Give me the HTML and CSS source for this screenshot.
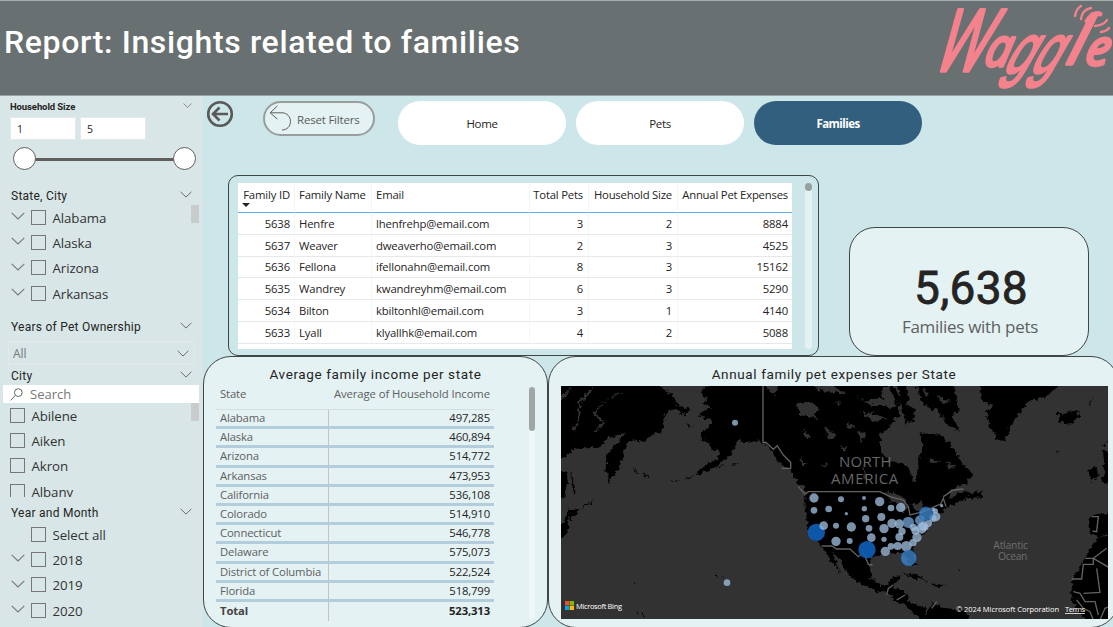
FILE: index.html
```
<!DOCTYPE html>
<html lang="en">
<head>
<meta charset="utf-8">
<title>Report: Insights related to families</title>
<link rel="stylesheet" href="styles.css">
</head>
<body>
<svg class="defs" width="0" height="0">
  <symbol id="chev" viewBox="0 0 14 8"><path d="M.7 .9 7 7 13.3 .9" fill="none" stroke="currentColor" stroke-width="1.1"/></symbol>
</svg>
<header class="top">
  <h1>Report: Insights related to families</h1>
  <svg class="logo" width="180" height="94" viewBox="933 2 180 94" role="img" aria-label="Waggle">
    <g class="word">
      <text transform="translate(933 71) skewX(-17) scale(.68 1)" font-size="86">W</text>
      <text transform="translate(983 66) skewX(-14) scale(.86 1)" font-size="53">a</text>
      <text class="g" transform="translate(1001 73) skewX(-30) scale(.86 1.28)" font-size="54">g</text>
      <text class="g" transform="translate(1028 73) skewX(-30) scale(.86 1.28)" font-size="54">g</text>
      <text transform="translate(1065 64) skewX(-16)" font-size="66">l</text>
      <text transform="translate(1084 65) skewX(-12) scale(.96 1)" font-size="49">e</text>
    </g>
    <g class="wag">
      <path d="M1075 16Q1076 9 1081 6M1081 19Q1082 10 1091 8M1095 26Q1104 25 1107 20M1101 32Q1107 31 1109 28"/><path stroke-width="5" d="M1087 21Q1094 12 1100 14"/>
    </g>
  </svg>
</header>
<div class="body">
  <aside class="side">
    <section class="f-size">
      <div class="head small"><b>Household Size</b><svg class="cv"><use href="#chev"/></svg></div>
      <div class="inputs"><span>1</span><span>5</span></div>
      <div class="slider"><i></i><i></i></div>
    </section>
    <section class="f-state">
      <div class="head"><span>State, City</span><svg class="cv"><use href="#chev"/></svg></div>
      <ul class="tree">
        <li><svg><use href="#chev"/></svg><i></i>Alabama</li>
        <li><svg><use href="#chev"/></svg><i></i>Alaska</li>
        <li><svg><use href="#chev"/></svg><i></i>Arizona</li>
        <li><svg><use href="#chev"/></svg><i></i>Arkansas</li>
      </ul>
      <div class="bar"></div>
    </section>
    <section class="f-years">
      <div class="head"><span>Years of Pet Ownership</span><svg class="cv"><use href="#chev"/></svg></div>
      <div class="drop"><span>All</span><svg class="cv"><use href="#chev"/></svg></div>
    </section>
    <section class="f-city">
      <div class="head"><span>City</span><svg class="cv"><use href="#chev"/></svg></div>
      <div class="search"><svg width="13" height="13" viewBox="0 0 13 13"><circle cx="8.3" cy="4.6" r="3.9"/><path d="M5.4 7.4.6 12.4"/></svg><span>Search</span></div>
      <ul class="tree flat">
        <li><i></i>Abilene</li>
        <li><i></i>Aiken</li>
        <li><i></i>Akron</li>
        <li><i></i>Albany</li>
      </ul>
      <div class="bar"></div>
    </section>
    <section class="f-month">
      <div class="head"><span>Year and Month</span><svg class="cv"><use href="#chev"/></svg></div>
      <ul class="tree">
        <li><svg></svg><i></i>Select all</li>
        <li><svg><use href="#chev"/></svg><i></i>2018</li>
        <li><svg><use href="#chev"/></svg><i></i>2019</li>
        <li><svg><use href="#chev"/></svg><i></i>2020</li>
      </ul>
    </section>
  </aside>
  <main>
    <nav>
      <svg class="back" width="28" height="28" viewBox="0 0 28 28"><circle cx="14" cy="14" r="11.8" stroke-width="2.6"/><path d="M22 14H7M13.5 7.5 7 14l6.5 6.5" stroke-width="2.6"/></svg>
      <button class="reset"><svg width="23" height="27" viewBox="0 0 23 27"><path d="M8.5.8 1.2 7.8 8.5 14.2M1.2 7.8H13c5 0 8.500 4 8.500 8.700S18 25 13 25"/></svg><span>Reset Filters</span></button>
      <a class="tab t1">Home</a><a class="tab">Pets</a><a class="tab on">Families</a>
    </nav>
    <div class="row1">
      <section class="panel families">
        <table>
          <colgroup><col style="width:57px"><col style="width:77px"><col style="width:158px"><col style="width:59px"><col style="width:89px"><col style="width:114px"></colgroup>
          <thead><tr><th class="sorted">Family ID</th><th class="l">Family Name</th><th class="l">Email</th><th>Total Pets</th><th>Household Size</th><th>Annual Pet Expenses</th></tr></thead>
          <tbody>
            <tr><td>5638</td><td class="l">Henfre</td><td class="l">lhenfrehp@email.com</td><td>3</td><td>2</td><td>8884</td></tr>
            <tr><td>5637</td><td class="l">Weaver</td><td class="l">dweaverho@email.com</td><td>2</td><td>3</td><td>4525</td></tr>
            <tr><td>5636</td><td class="l">Fellona</td><td class="l">ifellonahn@email.com</td><td>8</td><td>3</td><td>15162</td></tr>
            <tr><td>5635</td><td class="l">Wandrey</td><td class="l">kwandreyhm@email.com</td><td>6</td><td>3</td><td>5290</td></tr>
            <tr><td>5634</td><td class="l">Bilton</td><td class="l">kbiltonhl@email.com</td><td>3</td><td>1</td><td>4140</td></tr>
            <tr><td>5633</td><td class="l">Lyall</td><td class="l">klyallhk@email.com</td><td>4</td><td>2</td><td>5088</td></tr>
          </tbody>
        </table>
        <div class="scroll"><i></i></div>
      </section>
      <section class="panel card"><strong>5,638</strong><span>Families with pets</span></section>
    </div>
    <div class="row2">
      <section class="panel income">
        <h2>Average family income per state</h2>
        <div class="wrap">
        <table>
          <colgroup><col style="width:113px"><col style="width:165px"></colgroup>
          <thead><tr><th>State</th><th>Average of Household Income</th></tr></thead>
          <tbody>
            <tr><td>Alabama</td><td>497,285</td></tr>
            <tr><td>Alaska</td><td>460,894</td></tr>
            <tr><td>Arizona</td><td>514,772</td></tr>
            <tr><td>Arkansas</td><td>473,953</td></tr>
            <tr><td>California</td><td>536,108</td></tr>
            <tr><td>Colorado</td><td>514,910</td></tr>
            <tr><td>Connecticut</td><td>546,778</td></tr>
            <tr><td>Delaware</td><td>575,073</td></tr>
            <tr><td>District of Columbia</td><td>522,524</td></tr>
            <tr><td>Florida</td><td>518,799</td></tr>
            <tr class="total"><td>Total</td><td>523,313</td></tr>
          </tbody>
        </table>
        <div class="scroll"><i></i></div>
        </div>
      </section>
      <section class="panel mapbox">
        <h2>Annual family pet expenses per State</h2>
        <svg class="map" width="547" height="233" viewBox="0 0 547 233">
          <defs>
            <filter id="coast" x="0" y="0" width="100%" height="100%"><feTurbulence type="fractalNoise" baseFrequency=".22" numOctaves="3" seed="4"/><feDisplacementMap in="SourceGraphic" scale="7" xChannelSelector="R" yChannelSelector="G"/></filter>
          </defs>
          <rect width="547" height="233" fill="#323232"/>
          <g filter="url(#coast)">
          <rect x="-10" y="-10" width="567" height="253" fill="#323232"/>
          <g transform="translate(219 -31) scale(.33333)">
            <!-- Asia -->
            <path d="M-690 60H-375L-365 90-345 105-318 122-305 150-273 160-280 178-312 168-330 163-345 180-350 205-353 228-378 235-412 262-440 255-462 268-470 300-487 345-515 383-523 340-520 300-500 275-480 255-458 228-485 240-515 245-540 275-615 280-660 318H-690Z"/>
            <path d="M-680 345-640 350-636 385-645 420-680 450ZM-630 345-618 385-612 420-622 410ZM-635 462-600 467-615 480-632 485-635 520-650 548-680 550V520L-645 500Z"/>
            <path d="M-415 93-408 112-428 105ZM-280 206-262 216-270 218Z"/>
            <!-- North and Central America -->
            <path d="M-215 60V90L-240 115-215 128-230 145-205 160-225 165-248 178-225 190-200 195-212 215-235 230-240 252-215 262-205 285-175 290-190 310-225 335-260 362-220 347-180 328-150 300-132 275-125 255-105 262-85 258-55 262-35 275-5 320 30 345 42 370 75 400 76 430 78 480 85 525 100 555 122 570 145 605 180 655 168 622 152 590 170 600 198 645 212 670 250 690 290 708 320 715 352 740 380 752 400 780 430 795 440 760 400 745 385 735 375 705 335 700 362 665 340 662 328 690 300 690 275 670 270 640 275 605 300 600 345 594 372 594 392 630 408 630 395 580 420 550 440 520 462 498 490 472 500 458 520 448 575 425 560 405 530 420 512 432 505 405 560 385 580 355 550 330 530 300 512 270 480 240 422 232 428 270 412 330 412 385 395 372 385 330 340 320 300 290 300 240 330 212 355 180 360 130 340 90V60Z"/>
            <path d="M350 60H380L385 140 365 160ZM400 60H510L530 130 540 165 515 180 540 230 500 210 480 175 450 160 425 145ZM365 150 400 155 405 200 375 205ZM560 420 605 405 602 432 575 428ZM370 656 410 660 445 678 400 668ZM448 685 500 690 475 696Z"/>
            <path d="M420 815 455 745 500 760 560 765 570 815Z"/>
            <!-- Greenland, Iceland, Europe, Africa -->
            <path d="M605 60H845L835 90 800 125 745 140 715 180 690 215 672 262 650 250 630 215 618 170 640 150 605 140Z"/>
            <path d="M830 172 850 182 865 170 895 165 897 190 868 210 840 200ZM925 345 950 335 955 370 930 378ZM968 285 1010 290V390L965 380 975 345Z"/>
            <path d="M935 480 1020 468V530L955 545 925 530ZM955 545 1020 540V820H940L905 780 875 735 875 675 910 620 930 580Z"/>
            <g fill="#323232">
              <path d="M50 145 90 140 120 165 100 180 115 190 60 180ZM130 215 170 240 150 255ZM160 140 180 140 185 150ZM215 108 255 140 300 125 320 150 270 150ZM320 408 370 425 385 460 372 480 350 440 330 440ZM390 450 420 440 435 470 412 470ZM455 170 475 160 480 185 465 190ZM-50 90-5 90-15 120ZM90 92 150 90 200 115 130 112ZM240 170 280 175 320 190 280 200Z"/>
              <path d="M395 60 420 140 400 150 385 130ZM330 95 350 150 325 160 300 105ZM430 100 450 110 440 125ZM470 120 510 140 490 150ZM440 310 480 315 460 325ZM500 320 530 335 505 340ZM235 230 260 240 240 260ZM205 200 225 215 200 220ZM180 270 200 275 190 290ZM65 225 90 240 80 250ZM120 330 150 328 140 335ZM60 305 80 330 70 335ZM250 330 262 370 250 375Z"/>
              <path d="M-560 93-565 110-600 145-598 180-615 230-620 225-604 175-607 140-570 105ZM-480 110-540 150-560 175-530 205-560 230-555 232-522 205-552 175-530 140-475 113ZM-630 93-635 115-665 140-660 180-672 235-676 234-667 180-670 135-640 112Z"/>
            </g>
            <g class="isles"><path d="M-445 340-425 355M-410 360-390 365M-325 378-300 378M-290 375-260 362M-190 340-170 332M-140 328-125 325M-610 470-565 440M-195 660-185 664M-178 668-163 672M-440 683h5M-427 770v8M-412 772l5 12M825 285l10 8M960 275l25-16M925 155l10-22M540 650l-8-6"/></g>
          </g>
          </g>
          <g transform="translate(219 -31) scale(.33333)">
            <g class="border">
              <path d="M-51 90V262H-42L-20 283 -8 272 10 300 32 322V340H5M55 395 75 418 85 410H300L330 425 370 435 385 455 390 480 430 470 470 452 482 448 490 430 498 455M125 573H155L170 582H210L235 605 250 592 265 628 278 630M320 720 325 700 340 690M350 735 375 720M455 760 470 740M490 425 520 405 550 402"/>
              <path d="M935 485H955L950 530 938 528M875 672H905L910 628H940V610H915M950 640 960 712 910 715M940 610 1000 645M940 610 980 580M880 710 900 715 915 740 945 740 955 780M890 735 910 760 930 770 940 795M960 795 975 760 1000 750"/>
            </g>
            <g class="place"><text x="256" y="337" font-size="45" textLength="158">NORTH</text><text x="254" y="387" font-size="45" textLength="202">AMERICA</text></g>
            <g class="sea"><text x="692" y="581" font-size="31" textLength="104">Atlantic</text><text x="698" y="614" font-size="31" textLength="88">Ocean</text></g>
            <g class="dots">
              <circle cx="-135" cy="203" r="9"/><circle cx="-159" cy="683" r="10"/>
              <circle cx="102" cy="429" r="14"/><circle cx="102" cy="466" r="10"/><circle cx="146" cy="462" r="10"/><circle cx="183" cy="433" r="9"/><circle cx="199" cy="476" r="5"/><circle cx="252" cy="429" r="6"/><circle cx="253" cy="461" r="8"/><circle cx="257" cy="491" r="11"/><circle cx="299" cy="440" r="14"/><circle cx="333" cy="459" r="10"/><circle cx="362" cy="457" r="14"/><circle cx="304" cy="486" r="12"/>
              <circle cx="168" cy="512" r="9"/><circle cx="214" cy="516" r="14"/><circle cx="168" cy="559" r="14"/><circle cx="209" cy="558" r="9"/><circle cx="267" cy="520" r="10"/><circle cx="274" cy="548" r="13"/><circle cx="312" cy="521" r="14"/><circle cx="312" cy="553" r="8"/><circle cx="316" cy="589" r="14"/><circle cx="333" cy="574" r="10"/><circle cx="353" cy="573" r="12"/><circle cx="379" cy="574" r="16"/><circle cx="399" cy="563" r="11"/><circle cx="411" cy="547" r="14"/><circle cx="336" cy="505" r="14"/><circle cx="358" cy="507" r="14"/><circle cx="366" cy="529" r="11"/><circle cx="358" cy="546" r="12"/>
              <circle class="m" cx="385" cy="502" r="17"/><circle cx="400" cy="517" r="11"/><circle cx="406" cy="527" r="12"/><circle class="m" cx="420" cy="496" r="15"/><circle cx="425" cy="520" r="16"/><circle cx="430" cy="514" r="14"/><circle cx="437" cy="516" r="9"/><circle cx="445" cy="505" r="11"/><circle cx="459" cy="490" r="11"/><circle cx="467" cy="485" r="14"/><circle cx="466" cy="468" r="8"/><circle cx="460" cy="464" r="6"/><circle cx="485" cy="452" r="5"/>
              <circle class="h2" cx="438" cy="476" r="20"/><circle class="h2" cx="386" cy="609" r="23"/>
              <circle class="h" cx="109" cy="532" r="26"/><circle class="h" cx="261" cy="584" r="26"/><circle cx="131" cy="512" r="13"/>
            </g>
          </g>
          <g><path fill="#f25022" d="M4 215h4.300v4.300H4z"/><path fill="#7fba00" d="M8.700 215H13v4.300H8.700z"/><path fill="#00a4ef" d="M4 219.700h4.300v4.300H4z"/><path fill="#ffb900" d="M8.700 219.700H13v4.300H8.700z"/></g>
          <g class="credit"><text x="15" y="223" font-size="7.500" textLength="46">Microsoft Bing</text><text x="395" y="226" font-size="7.500" textLength="103">© 2024 Microsoft Corporation</text><text class="terms" x="504" y="226" font-size="7.500" textLength="20">Terms</text></g>
        </svg>
      </section>
    </div>
  </main>
</div>
</body>
</html>
```
FILE: styles.css
```
* { box-sizing: border-box; }
body { margin: 0; width: 1113px; height: 627px; overflow: hidden; background: #cce6ea; color: #252423; font-family: "Open Sans", "Noto Sans", sans-serif; }
.defs { position: absolute; }
ul, h1, h2 { margin: 0; padding: 0; list-style: none; font-weight: 400; }
.top { height: 96px; background: #697071; border-top: 1px solid #a6abab; border-bottom: 1px solid #9b9fa0; display: flex; justify-content: space-between; }
.top h1 { color: #fff; font: 500 32px/38px Roboto, sans-serif; letter-spacing: .64px; padding: 22px 0 0 4px; white-space: nowrap; }
.logo { display: block; flex: none; margin-top: 1px; overflow: visible; }
.word { fill: #f4828d; stroke: #f4828d; stroke-width: 3.400; stroke-linejoin: round; font-family: "Open Sans", sans-serif; font-style: italic; font-weight: 400; }
.word .g { font-family: "Liberation Sans", sans-serif; font-style: normal; stroke-width: 2.200; }
.wag { fill: none; stroke: #f4828d; stroke-width: 2.4; stroke-linecap: round; }
.body { display: flex; height: 531px; }
.side { width: 203px; background: #d8e6e7; flex: none; }
.side section { position: relative; overflow: hidden; }
.head { display: flex; justify-content: space-between; align-items: center; padding: 0 11px 0 11px; height: 18px; font: 400 12px/18px Roboto, sans-serif; letter-spacing: .25px; color: #252423; }
.head.small { font-size: 9.500px; letter-spacing: -.1px; height: 16px; padding-left: 10px; }
.cv { width: 12px; height: 7px; color: #666; flex: none; margin-bottom: 3px; }
.small .cv { width: 9px; height: 5px; }
.f-size { height: 90px; padding-top: 3px; }
.inputs { display: flex; gap: 4px; padding: 2px 0 0 10px; }
.inputs span { width: 66px; height: 23px; background: #fff; border: 1px solid #e8e8e8; font-size: 10.500px; line-height: 22px; padding-left: 6px; }
.slider { display: flex; justify-content: space-between; width: 183px; height: 24px; margin: 7px 0 0 13px; background: linear-gradient(#605e5c, #605e5c) center/150px 3px no-repeat; }
.slider i { width: 23px; height: 23px; border-radius: 50%; background: #fff; border: 1.500px solid #605e5c; }
.f-state { height: 132px; }
.tree li { display: flex; align-items: center; height: 25.300px; padding-left: 11px; font-size: 13.300px; color: #333; letter-spacing: -.1px; }
.tree svg { width: 14px; height: 8px; color: #777; margin-right: 6px; margin-bottom: 3px; }
.tree i { width: 15px; height: 15px; border: 1px solid #777; margin-right: 6.500px; flex: none; margin-bottom: 1px; }
.flat li { padding-left: 10px; }
.bar { position: absolute; right: 4px; top: 19px; width: 8px; height: 18px; background: #c8cccc; }
.f-state .head { margin-top: 1px; }
.f-years { height: 49px; }
.drop { margin: 5px 0 0 8px; width: 187px; height: 24px; border: 1px solid #e3e9e9; display: flex; justify-content: space-between; align-items: center; padding: 0 5px 0 4px; font-size: 12px; color: #777; }
.f-years .drop .cv { margin: 0; }
.f-city { height: 137px; }
.search { margin: 0 4px 0 3px; height: 18px; background: #fff; display: flex; align-items: center; padding-left: 7px; gap: 7px; font-size: 13px; color: #777; }
.search svg { fill: none; stroke: #666; stroke-width: 1; }
.f-city .bar { top: 36px; }
.f-city .tree { height: 94px; overflow: hidden; }
main { flex: 1; min-width: 0; }
nav { height: 79px; display: flex; padding: 5px 0 0 3px; align-items: flex-start; }
.back { fill: none; stroke: #5b5957; margin-top: -1px; }
.reset { width: 112px; height: 35px; margin-left: 29px; border: 2px solid #999d9c; border-radius: 18px; background: #e4f2f3; padding: 0 0 0 4px; display: flex; align-items: center; gap: 5px; font: 11.500px "Open Sans", sans-serif; color: #5b5b5a; letter-spacing: -.2px; white-space: nowrap; }
.reset span { padding-top: 2px; }
.reset svg { fill: none; stroke: #605e5c; stroke-width: 1; flex: none; }
.tab { width: 168px; height: 44px; border-radius: 22px; background: #fff; text-align: center; font-size: 11.500px; line-height: 45px; margin-right: 10px; letter-spacing: -.35px; }
.t1 { margin-left: 23px; }
.tab.on { background: #335f7e; color: #fff; font-weight: 700; letter-spacing: -.55px; }
.row1 { display: flex; align-items: flex-end; height: 181px; padding-left: 25px; gap: 31px; }
.panel { border: 1px solid #3f4646; background: #e4f2f3; }
.families { width: 591px; height: 181px; border-radius: 10px; background: none; padding: 7px 6px 6px 9px; display: flex; justify-content: space-between; margin-right: -1px; }
table { border-collapse: separate; border-spacing: 0; table-layout: fixed; }
.families table { width: 554px; height: 166px; background: #fff; font-size: 11.300px; letter-spacing: -.15px; display: block; overflow: hidden; }
.families th { height: 30px; font-weight: 400; text-align: right; padding: 3px 4px 0 4px; vertical-align: top; border-bottom: 1px solid #5fa8ec; border-right: 1px solid #eef7f8; white-space: nowrap; line-height: 18px; }
.families td { height: 21.800px; padding: 0 4px; line-height: 19px; text-align: right; border-bottom: 1px solid #e6e9ea; border-right: 1px solid #f1f8f9; }
.families th:nth-child(n+4) { letter-spacing: -.2px; padding-left: 1px; }
.families th:nth-child(4), .families td:nth-child(4), .families th:nth-child(5), .families td:nth-child(5) { padding-right: 5px; }
.families th:last-child, .families td:last-child { border-right: 0; }
.families .l { text-align: left; }
.families th.sorted::after { content: ""; display: block; border: 4px solid transparent; border-top-color: #252423; border-bottom: 0; width: 0; margin-top: -1px; }
.scroll { width: 7px; border-radius: 4px; background: #e4f2f3; flex: none; }
.scroll i { display: block; width: 7px; height: 8px; border-radius: 4px; background: #979f9f; }
.card { width: 240px; height: 129px; border-radius: 26px; display: flex; flex-direction: column; align-items: center; padding-top: 34px; }
.card strong { font: 400 46px/52px Roboto, sans-serif; letter-spacing: .3px; padding-left: 4px; -webkit-text-stroke: .8px #252423; }
.card span { font-size: 17px; line-height: 26px; color: #5e6060; letter-spacing: -.3px; padding-left: 2px; }
.row2 { display: flex; }
.row2 .panel { height: 272px; border-radius: 28px; flex: none; }
.row2 h2 { font: 400 13.500px/18px Roboto, sans-serif; letter-spacing: .62px; text-align: center; white-space: nowrap; }
.income { width: 345px; padding-top: 8px; }
.wrap { display: flex; padding-left: 12px; justify-content: space-between; padding-right: 12px; }
.income table { width: 278px; font-size: 11.300px; margin-top: 2px; letter-spacing: -.15px; color: #252423; }
.income th { height: 25px; padding: 0 4px 0; font-weight: 400; text-align: left; color: #5e6060; vertical-align: top; line-height: 18px; border-bottom: 1px solid #d3dede; white-space: nowrap; }
.income th + th { letter-spacing: -.08px; }
.income th + th, .income td + td { text-align: right; }
.income td { height: 19.200px; padding: 0 4px; line-height: 16px; border-bottom: 3px solid #b3cddd; white-space: nowrap; }
.income td:first-child { color: #5e6060; border-right: 1px solid #c3c3c3; }
.income .total td { font-weight: 700; border-bottom: 0; }
.income .total td:first-child { color: #444; }
.income .scroll { width: 6px; height: 232px; margin-top: 4px; background: #eff8f9; }
.income .scroll i { width: 6px; height: 44px; background: #a0a6a6; }
.mapbox { width: 571px; padding: 8px 0 0 12px; }
.mapbox h2 { padding-right: 11px; }
.map { display: block; margin-top: 3px; }
.isles { fill: none; stroke: #000; stroke-width: 3; }
.border { fill: none; stroke: #626262; stroke-width: 4; }
.place { fill: #666; font-family: "Open Sans", sans-serif; text-anchor: middle; }
.sea { fill: #6e6e6e; font-family: "Open Sans", sans-serif; text-anchor: middle; }
.dots { fill: #9dbbdb; fill-opacity: .78; }
.dots .m { fill: #6f9fd0; }
.dots .h2 { fill: #3f87cc; stroke: #1668bd; stroke-width: 2; }
.dots .h { fill: #0d5cb0; fill-opacity: .95; }
.credit { fill: #fff; font-family: "Open Sans", sans-serif; }
.terms { text-decoration: underline; }
```
